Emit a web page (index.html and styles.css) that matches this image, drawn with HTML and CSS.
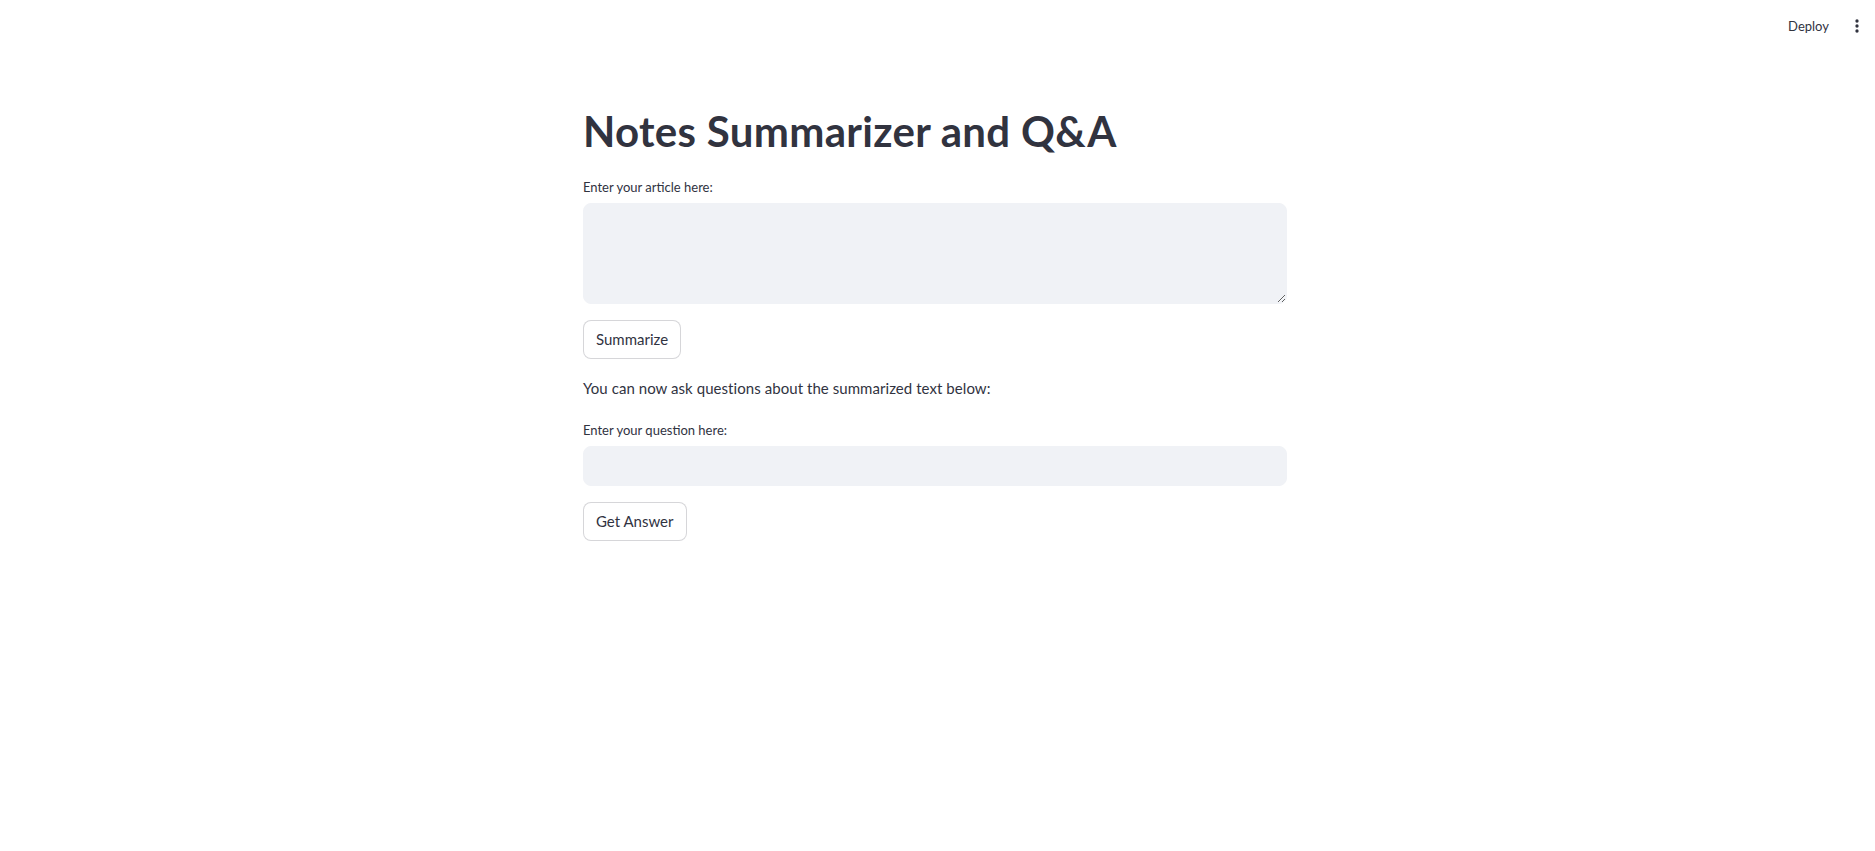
FILE: index.html
```html
<!DOCTYPE html>
<html lang="en">
<head>
<meta charset="utf-8">
<title>Notes Summarizer and Q&amp;A</title>
<link rel="stylesheet" href="styles.css">
</head>
<body>
  <header class="toolbar">
    <span class="deploy">Deploy</span>
    <span class="menu-btn" aria-label="Main menu">
      <svg viewBox="0 0 24 24" width="20" height="20" aria-hidden="true">
        <circle cx="12" cy="6" r="2" fill="#31333f"/>
        <circle cx="12" cy="12" r="2" fill="#31333f"/>
        <circle cx="12" cy="18" r="2" fill="#31333f"/>
      </svg>
    </span>
  </header>
  <main class="app">
    <section class="block">
      <h1 class="title">Notes Summarizer and Q&amp;A</h1>
      <label class="field-label" for="article">Enter your article here:</label>
      <textarea id="article" class="textarea"></textarea>
      <button class="btn btn-first" type="button">Summarize</button>
      <p class="note">You can now ask questions about the summarized text below:</p>
      <label class="field-label field-label-2" for="question">Enter your question here:</label>
      <input id="question" class="text-input" type="text">
      <button class="btn btn-second" type="button">Get Answer</button>
    </section>
  </main>
</body>
</html>
```

FILE: styles.css
```css
html, body {
  margin: 0;
  padding: 0;
  background: #ffffff;
}

body {
  font-family: "Lato", "Noto Sans", sans-serif;
  color: #31333f;
  -webkit-font-smoothing: antialiased;
}

.toolbar {
  height: 52px;
  display: flex;
  justify-content: flex-end;
  align-items: center;
  gap: 18px;
  padding-right: 8px;
}

.deploy {
  font-size: 13px;
  line-height: 16px;
  color: #31333f;
}

.menu-btn {
  display: flex;
  width: 20px;
  height: 20px;
}

.app {
  display: flex;
  justify-content: center;
  padding-right: 5px;
}

.block {
  width: 704px;
  display: flex;
  flex-direction: column;
  align-items: flex-start;
}

.title {
  margin: 54px 0 0;
  font-size: 42px;
  line-height: 50px;
  font-weight: 700;
  letter-spacing: 0.3px;
  color: #31333f;
}

.field-label {
  margin-top: 23px;
  font-size: 13px;
  line-height: 16px;
  color: #31333f;
}

.field-label-2 {
  margin-top: 25px;
}

.textarea {
  margin-top: 8px;
  box-sizing: border-box;
  width: 100%;
  height: 101px;
  border: 1px solid #f0f2f6;
  border-radius: 8px;
  background: #f0f2f6;
  resize: vertical;
  font-family: inherit;
  font-size: 15px;
  padding: 12px 16px;
  outline: none;
}

.text-input {
  margin-top: 8px;
  box-sizing: border-box;
  width: 100%;
  height: 40px;
  border: 1px solid #f0f2f6;
  border-radius: 8px;
  background: #f0f2f6;
  font-family: inherit;
  font-size: 15px;
  padding: 0 12px;
  outline: none;
}

.btn {
  box-sizing: border-box;
  height: 39px;
  padding: 0 12px;
  border: 1px solid rgba(49, 51, 63, 0.2);
  border-radius: 8px;
  background: #ffffff;
  color: #31333f;
  font-family: inherit;
  font-size: 15px;
  line-height: 1;
  cursor: pointer;
}

.btn-first {
  margin-top: 16px;
}

.btn-second {
  margin-top: 16px;
}

.note {
  margin: 20px 0 0;
  font-size: 15px;
  line-height: 18px;
  letter-spacing: 0.06px;
  color: #31333f;
}
```
